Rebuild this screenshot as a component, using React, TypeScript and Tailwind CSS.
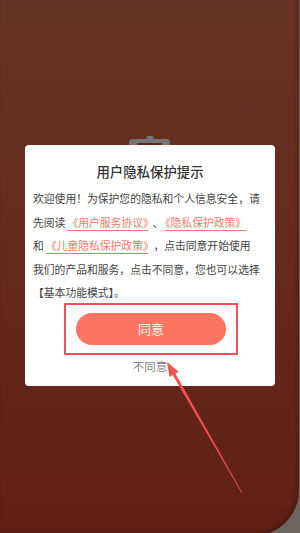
import React from 'react'

const LINK = 'text-[#f6776c] underline decoration-[#f6776c] underline-offset-[3px] decoration-1'

function Clipboard() {
  return (
    <svg className="absolute left-[129px] top-[136px]" width="42" height="20" viewBox="0 0 42 20">
      <rect x="0" y="3" width="41" height="17" rx="4" fill="#787473" />
      <rect x="17.5" y="0" width="7" height="6" rx="1.5" fill="#787473" />
      <rect x="8" y="7" width="25" height="13" rx="1" fill="#612a1e" />
    </svg>
  )
}

function Arrow() {
  return (
    <svg className="absolute inset-0 pointer-events-none z-20" width="300" height="533" viewBox="0 0 300 533">
      <polygon
        points="167,362 178.6,371.8 175.4,373.5 242.4,492.9 241.8,493.2 172.7,374.9 169.5,377 "
        fill="#f2514f"
      />
    </svg>
  )
}

export default function App() {
  return (
    <div className="relative w-[300px] h-[533px] overflow-hidden bg-[#6d6561] font-['Noto_Sans_CJK_SC','Noto_Sans',sans-serif]">
      <div className="relative w-[299px] h-[536px] rounded-br-[46px] bg-linear-to-b from-[#663424] to-[#611f14] shadow-[inset_-2px_-3px_4px_rgba(0,0,0,0.18)] pt-[145px] pl-[25px]">
        <Clipboard />
        {/* 弹窗 */}
        <div className="relative z-10 w-[250px] bg-white rounded-[4px] pt-[16px] pb-[12px]">
          <div className="text-center text-[13.4px] leading-[20px] font-medium text-[#333]">用户隐私保护提示</div>
          <div className="mt-[6px] pl-[8px] text-[10.8px] leading-[23.5px] text-[#444] whitespace-nowrap">
            <div>欢迎使用！为保护您的隐私和个人信息安全，请</div>
            <div>
              先阅读<span className={`${LINK} ml-[2px]`}>《用户服务协议》</span>
              <span className="ml-[4px]">、</span>
              <span className={`${LINK} ml-[2px]`}>《隐私保护政策》</span>
            </div>
            <div>
              和<span className={`${LINK} ml-[2px]`}>《儿童隐私保护政策》</span>
              <span className="ml-[5px]">，点击同意开始使用</span>
            </div>
            <div>我们的产品和服务，点击不同意，您也可以选择</div>
            <div>【基本功能模式】。</div>
          </div>
          <div className="mt-[-2px] ml-[39px] w-[174px] h-[52px] border-2 border-[#f0525a] flex items-center justify-center">
            <button className="w-[150px] h-[32px] rounded-full bg-[#fb7562] text-[13px] text-[#fff3ef]">同意</button>
          </div>
          <div className="mt-[3px] text-center text-[11.5px] leading-[16px] text-[#7f7f7f]">不同意</div>
        </div>
      </div>
      <Arrow />
    </div>
  )
}
